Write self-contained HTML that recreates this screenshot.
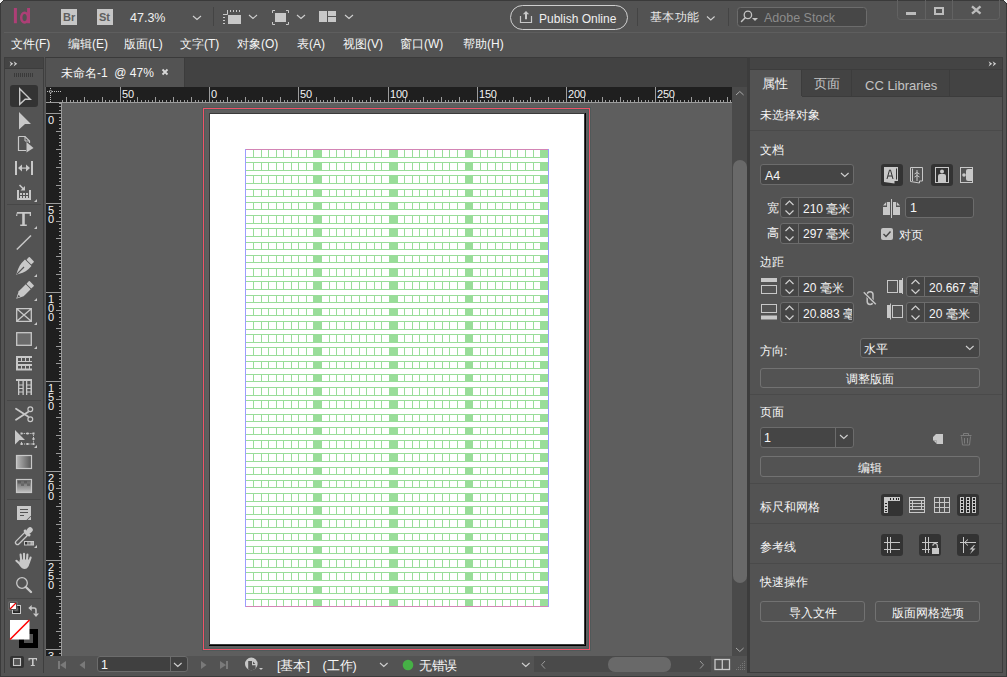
<!DOCTYPE html>
<html><head><meta charset="utf-8">
<style>
*{box-sizing:border-box;margin:0;padding:0}
html,body{width:1007px;height:677px;overflow:hidden;background:#535353;font-family:"Liberation Sans",sans-serif;color:#f6f6f6;font-size:12px}
body{position:relative}
.a{position:absolute}
.t{position:absolute;white-space:nowrap;line-height:1}
svg{position:absolute;overflow:visible}
.rl{position:absolute;font-size:11px;line-height:8px;height:8px;color:#f2f2f2;letter-spacing:-0.2px;white-space:nowrap}
.fld{position:absolute;background:#454545;border:1px solid #6c6c6c;border-radius:3px}
.btn{position:absolute;border:1px solid #727272;border-radius:3px;text-align:center;line-height:18px;font-size:12px}
.ic{fill:#c8c8c8;stroke:#c8c8c8}
</style></head><body>
<!-- window frame -->
<div class="a" style="left:0;top:0;width:1007px;height:677px;background:#535353;border:1px solid #3a3a3a"></div>
<div class="a" style="left:4px;top:32px;width:1002px;height:1px;background:#5e5e5e"></div>

<svg style="left:0;top:0" width="1007" height="677">
<!-- separators -->
<path d="M213.5 7v19M637.5 8v18M728.5 8v18" stroke="#444" stroke-width="1"/>
<!-- chevrons -->
<path d="M193 16l4 3.5 4-3.5M249 15l4 3.5 4-3.5M297 15l4 3.5 4-3.5M345 15l4 3.5 4-3.5M707 16.5l3.8 3.5 3.8-3.5" fill="none" stroke="#cfcfcf" stroke-width="1.1"/>
<!-- ruler icon -->
<path d="M228 15h13v9h-13z" fill="#c8c8c8"/>
<path d="M227.5 10v4.5H223" fill="none" stroke="#c8c8c8" stroke-width="1"/>
<path d="M230.5 10v2M233.5 10v2M236.5 10v2M239.5 10v2M223 17.5h2M223 20.5h2M223 23.5h2" stroke="#c8c8c8" stroke-width="1"/>
<!-- screen mode icon -->
<path d="M275 13h11v9h-11z" fill="#c8c8c8"/>
<path d="M272.5 13V10.5H275M286 10.5h2.5V13M288.5 22v2.5H286M275 24.5h-2.5V22" fill="none" stroke="#c8c8c8" stroke-width="1"/>
<!-- arrange icon -->
<path d="M319 11h8v11h-8zM328 11h8v5h-8zM328 17h8v5h-8z" fill="#c8c8c8"/>
<!-- publish button -->
<rect x="510.5" y="5.5" width="117" height="24" rx="12" fill="none" stroke="#cfcfcf" stroke-width="1"/>
<path d="M520.5 16v6.5h11V16" fill="none" stroke="#c8c8c8" stroke-width="1.2"/>
<path d="M526 11l-3.2 3.2h2.2v5h2v-5h2.2z" fill="#c8c8c8"/>
<!-- search box -->
<rect x="737.5" y="7.5" width="129" height="19" rx="3" fill="#474747" stroke="#6c6c6c" stroke-width="1"/>
<circle cx="747.9" cy="14.9" r="3.7" fill="none" stroke="#c4c4c4" stroke-width="1.3"/>
<path d="M745.2 17.8L741.5 21.5" stroke="#c4c4c4" stroke-width="1.5" stroke-linecap="round"/>
<path d="M752 18h6l-3 3z" fill="#c4c4c4"/>
<!-- window buttons -->
<path d="M897.5 0v16.5a3 3 0 0 0 3 3h96a3 3 0 0 0 3-3V0M925.5 0v19.5M952.5 0v19.5" fill="none" stroke="#626262" stroke-width="1"/>
<path d="M906 12h10v3h-10z" fill="#bcbcbc"/>
<path d="M934 7h10v8h-10zM936 9v4h6v-4z" fill="#bcbcbc" fill-rule="evenodd"/>
<path d="M972 6.3l8.5 7.4M980.5 6.3l-8.5 7.4" stroke="#bcbcbc" stroke-width="2.3"/>
<!-- corners -->
<path d="M0 0h3v1h-1v1h-1v1h-1zM1007 0h-3v1h1v1h1v1h1z" fill="#f0f0f0" shape-rendering="crispEdges"/><path d="M3 0h1v1h-1v1h-1v1h-1v1h-1v-1h1v-1h1v-1h1zM1004 0h-1v1h1v1h1v1h1v1h1v-1h-1v-1h-1v-1h-1z" fill="#333" shape-rendering="crispEdges"/>
</svg>

<!-- TITLE BAR -->
<svg style="left:0;top:0" width="40" height="30"><path d="M13.9 8h3v15.2h-3zM27.1 8h2.9v15.2h-2.9z" fill="#ad3f76"/><ellipse cx="24.6" cy="17.6" rx="3.4" ry="4.8" fill="none" stroke="#ad3f76" stroke-width="2.5"/></svg>
<div class="a" style="left:61px;top:9px;width:16px;height:16px;background:#c6c6c6"></div>
<div class="t" style="left:63px;top:12px;font-size:11px;font-weight:bold;color:#5e5e5e">Br</div>
<div class="a" style="left:97px;top:9px;width:16px;height:16px;background:#c6c6c6"></div>
<div class="t" style="left:99px;top:12px;font-size:11px;font-weight:bold;color:#5e5e5e">St</div>
<div class="t" style="left:130px;top:12px;font-size:12.5px;color:#f0f0f0">47.3%</div>

<div class="t" style="left:539px;top:13px;font-size:12px;color:#f0f0f0">Publish Online</div>
<div class="t" style="left:650px;top:11px;font-size:12px;color:#e8e8e8;letter-spacing:0.3px">基本功能</div>
<div class="t" style="left:764px;top:12px;font-size:12.5px;color:#8c8c8c">Adobe Stock</div>
<!-- MENU BAR -->
<div class="t" style="left:11px;top:38px">文件(F)</div>
<div class="t" style="left:68px;top:38px">编辑(E)</div>
<div class="t" style="left:124px;top:38px">版面(L)</div>
<div class="t" style="left:180px;top:38px">文字(T)</div>
<div class="t" style="left:237px;top:38px">对象(O)</div>
<div class="t" style="left:297px;top:38px">表(A)</div>
<div class="t" style="left:343px;top:38px">视图(V)</div>
<div class="t" style="left:400px;top:38px">窗口(W)</div>
<div class="t" style="left:463px;top:38px">帮助(H)</div>

<!-- LEFT TOOLBAR -->
<div class="a" style="left:45px;top:57px;width:958px;height:1px;background:#3a3a3a"></div>
<div class="a" style="left:4px;top:57px;width:40px;height:616px;background:#535353;border:1px solid #3e3e3e;border-bottom:none"></div>
<div class="a" style="left:5px;top:58px;width:38px;height:11px;background:#444;border-bottom:1px solid #3c3c3c"></div>

<!-- DOC TAB BAR -->
<div class="a" style="left:45px;top:58px;width:704px;height:29px;background:#424242"></div>
<div class="a" style="left:46px;top:58px;width:138px;height:29px;background:#535353"></div>
<div class="a" style="left:184px;top:58px;width:1px;height:29px;background:#3c3c3c"></div>
<div class="t" style="left:61px;top:67px">未命名-1&nbsp; @ 47%</div>
<svg style="left:0;top:0" width="1" height="1"><path d="M162.5 69.5l5 5M167.5 69.5l-5 5" stroke="#d8d8d8" stroke-width="1.8"/></svg>

<!-- CANVAS -->
<div class="a" style="left:45px;top:87px;width:687px;height:569px;background:#5e5e5e"></div>
<div class="a" style="left:46px;top:87px;width:686px;height:15px;background:#1f1f1f"></div>
<div class="a" style="left:46px;top:103px;width:15px;height:553px;background:#1f1f1f"></div>
<svg style="left:0;top:0" width="1007" height="677" shape-rendering="crispEdges">
<path d="M62.5 100V102M66.5 97V102M70.5 100V102M73.5 100V102M77.5 100V102M80.5 100V102M84.5 97V102M87.5 100V102M91.5 100V102M95.5 100V102M98.5 100V102M102.5 97V102M105.5 100V102M109.5 100V102M112.5 100V102M116.5 100V102M120.5 87V102M123.5 100V102M127.5 100V102M130.5 100V102M134.5 100V102M137.5 97V102M141.5 100V102M145.5 100V102M148.5 100V102M152.5 100V102M155.5 97V102M159.5 100V102M162.5 100V102M166.5 100V102M170.5 100V102M173.5 97V102M177.5 100V102M180.5 100V102M184.5 100V102M187.5 100V102M191.5 97V102M195.5 100V102M198.5 100V102M202.5 100V102M205.5 100V102M209.5 87V102M212.5 100V102M216.5 100V102M220.5 100V102M223.5 100V102M227.5 97V102M230.5 100V102M234.5 100V102M237.5 100V102M241.5 100V102M245.5 97V102M248.5 100V102M252.5 100V102M255.5 100V102M259.5 100V102M262.5 97V102M266.5 100V102M270.5 100V102M273.5 100V102M277.5 100V102M280.5 97V102M284.5 100V102M287.5 100V102M291.5 100V102M295.5 100V102M298.5 87V102M302.5 100V102M305.5 100V102M309.5 100V102M312.5 100V102M316.5 97V102M320.5 100V102M323.5 100V102M327.5 100V102M330.5 100V102M334.5 97V102M337.5 100V102M341.5 100V102M345.5 100V102M348.5 100V102M352.5 97V102M355.5 100V102M359.5 100V102M362.5 100V102M366.5 100V102M370.5 97V102M373.5 100V102M377.5 100V102M380.5 100V102M384.5 100V102M388.5 87V102M391.5 100V102M395.5 100V102M398.5 100V102M402.5 100V102M405.5 97V102M409.5 100V102M413.5 100V102M416.5 100V102M420.5 100V102M423.5 97V102M427.5 100V102M430.5 100V102M434.5 100V102M438.5 100V102M441.5 97V102M445.5 100V102M448.5 100V102M452.5 100V102M455.5 100V102M459.5 97V102M463.5 100V102M466.5 100V102M470.5 100V102M473.5 100V102M477.5 87V102M480.5 100V102M484.5 100V102M488.5 100V102M491.5 100V102M495.5 97V102M498.5 100V102M502.5 100V102M505.5 100V102M509.5 100V102M513.5 97V102M516.5 100V102M520.5 100V102M523.5 100V102M527.5 100V102M530.5 97V102M534.5 100V102M538.5 100V102M541.5 100V102M545.5 100V102M548.5 97V102M552.5 100V102M555.5 100V102M559.5 100V102M563.5 100V102M566.5 87V102M570.5 100V102M573.5 100V102M577.5 100V102M580.5 100V102M584.5 97V102M588.5 100V102M591.5 100V102M595.5 100V102M598.5 100V102M602.5 97V102M605.5 100V102M609.5 100V102M613.5 100V102M616.5 100V102M620.5 97V102M623.5 100V102M627.5 100V102M630.5 100V102M634.5 100V102M638.5 97V102M641.5 100V102M645.5 100V102M648.5 100V102M652.5 100V102M655.5 87V102M659.5 100V102M663.5 100V102M666.5 100V102M670.5 100V102M673.5 97V102M677.5 100V102M680.5 100V102M684.5 100V102M688.5 100V102M691.5 97V102M695.5 100V102M698.5 100V102M702.5 100V102M705.5 100V102M709.5 97V102M713.5 100V102M716.5 100V102M720.5 100V102M723.5 100V102M727.5 97V102M730.5 100V102M46 102.5H732" stroke="#9c9c9c" fill="none"/>
<path d="M59 103.5H61M59 106.5H61M59 110.5H61M46 113.5H61M59 117.5H61M59 120.5H61M59 124.5H61M59 128.5H61M56 131.5H61M59 135.5H61M59 138.5H61M59 142.5H61M59 145.5H61M56 149.5H61M59 153.5H61M59 156.5H61M59 160.5H61M59 163.5H61M56 167.5H61M59 171.5H61M59 174.5H61M59 178.5H61M59 181.5H61M56 185.5H61M59 188.5H61M59 192.5H61M59 196.5H61M59 199.5H61M46 203.5H61M59 206.5H61M59 210.5H61M59 213.5H61M59 217.5H61M56 221.5H61M59 224.5H61M59 228.5H61M59 231.5H61M59 235.5H61M56 238.5H61M59 242.5H61M59 246.5H61M59 249.5H61M59 253.5H61M56 256.5H61M59 260.5H61M59 263.5H61M59 267.5H61M59 271.5H61M56 274.5H61M59 278.5H61M59 281.5H61M59 285.5H61M59 288.5H61M46 292.5H61M59 296.5H61M59 299.5H61M59 303.5H61M59 306.5H61M56 310.5H61M59 313.5H61M59 317.5H61M59 321.5H61M59 324.5H61M56 328.5H61M59 331.5H61M59 335.5H61M59 338.5H61M59 342.5H61M56 346.5H61M59 349.5H61M59 353.5H61M59 356.5H61M59 360.5H61M56 363.5H61M59 367.5H61M59 371.5H61M59 374.5H61M59 378.5H61M46 381.5H61M59 385.5H61M59 388.5H61M59 392.5H61M59 396.5H61M56 399.5H61M59 403.5H61M59 406.5H61M59 410.5H61M59 413.5H61M56 417.5H61M59 421.5H61M59 424.5H61M59 428.5H61M59 431.5H61M56 435.5H61M59 438.5H61M59 442.5H61M59 446.5H61M59 449.5H61M56 453.5H61M59 456.5H61M59 460.5H61M59 463.5H61M59 467.5H61M46 471.5H61M59 474.5H61M59 478.5H61M59 481.5H61M59 485.5H61M56 488.5H61M59 492.5H61M59 496.5H61M59 499.5H61M59 503.5H61M56 506.5H61M59 510.5H61M59 513.5H61M59 517.5H61M59 521.5H61M56 524.5H61M59 528.5H61M59 531.5H61M59 535.5H61M59 538.5H61M56 542.5H61M59 546.5H61M59 549.5H61M59 553.5H61M59 556.5H61M46 560.5H61M59 563.5H61M59 567.5H61M59 571.5H61M59 574.5H61M56 578.5H61M59 581.5H61M59 585.5H61M59 588.5H61M59 592.5H61M56 596.5H61M59 599.5H61M59 603.5H61M59 606.5H61M59 610.5H61M56 613.5H61M59 617.5H61M59 621.5H61M59 624.5H61M59 628.5H61M56 631.5H61M59 635.5H61M59 638.5H61M59 642.5H61M59 646.5H61M46 649.5H61M59 653.5H61M61.5 103V656" stroke="#9c9c9c" fill="none"/>
</svg><div class="rl" style="left:122px;top:90px">50</div><div class="rl" style="left:211px;top:90px">0</div><div class="rl" style="left:300px;top:90px">50</div><div class="rl" style="left:390px;top:90px">100</div><div class="rl" style="left:479px;top:90px">150</div><div class="rl" style="left:568px;top:90px">200</div><div class="rl" style="left:657px;top:90px">250</div><div class="a" style="left:46px;top:103px;width:15px;height:553px;overflow:hidden"><div class="rl" style="left:2px;top:13px">0</div><div class="rl" style="left:2px;top:103px">5</div><div class="rl" style="left:2px;top:112px">0</div><div class="rl" style="left:2px;top:192px">1</div><div class="rl" style="left:2px;top:201px">0</div><div class="rl" style="left:2px;top:210px">0</div><div class="rl" style="left:2px;top:281px">1</div><div class="rl" style="left:2px;top:290px">5</div><div class="rl" style="left:2px;top:299px">0</div><div class="rl" style="left:2px;top:371px">2</div><div class="rl" style="left:2px;top:380px">0</div><div class="rl" style="left:2px;top:389px">0</div><div class="rl" style="left:2px;top:460px">2</div><div class="rl" style="left:2px;top:469px">5</div><div class="rl" style="left:2px;top:478px">0</div><div class="rl" style="left:2px;top:549px">3</div><div class="rl" style="left:2px;top:558px">0</div><div class="rl" style="left:2px;top:567px">0</div></div>

<!-- page -->
<div class="a" style="left:202px;top:107px;width:389px;height:544px;border:1px solid #4f5959"></div>
<div class="a" style="left:203px;top:108px;width:387px;height:542px;border:1px solid #ef5468"></div>
<div class="a" style="left:204px;top:109px;width:385px;height:540px;border:1px solid #4f5959"></div>
<div class="a" style="left:209px;top:113px;width:377px;height:533px;background:#000"></div>
<div class="a" style="left:209px;top:113px;width:376px;height:532px;background:#3a3a3a"></div>
<div class="a" style="left:210px;top:114px;width:374px;height:530px;background:#fff"></div>
<svg style="left:0;top:0" width="1007" height="677" shape-rendering="crispEdges">
<path d="M313 149H322V158H313ZM389 149H398V158H389ZM465 149H473V158H465ZM540 149H549V158H540ZM313 162H322V171H313ZM389 162H398V171H389ZM465 162H473V171H465ZM540 162H549V171H540ZM313 175H322V184H313ZM389 175H398V184H389ZM465 175H473V184H465ZM540 175H549V184H540ZM313 189H322V197H313ZM389 189H398V197H389ZM465 189H473V197H465ZM540 189H549V197H540ZM313 202H322V210H313ZM389 202H398V210H389ZM465 202H473V210H465ZM540 202H549V210H540ZM313 215H322V224H313ZM389 215H398V224H389ZM465 215H473V224H465ZM540 215H549V224H540ZM313 228H322V237H313ZM389 228H398V237H389ZM465 228H473V237H465ZM540 228H549V237H540ZM313 242H322V250H313ZM389 242H398V250H389ZM465 242H473V250H465ZM540 242H549V250H540ZM313 255H322V263H313ZM389 255H398V263H389ZM465 255H473V263H465ZM540 255H549V263H540ZM313 268H322V277H313ZM389 268H398V277H389ZM465 268H473V277H465ZM540 268H549V277H540ZM313 281H322V290H313ZM389 281H398V290H389ZM465 281H473V290H465ZM540 281H549V290H540ZM313 295H322V303H313ZM389 295H398V303H389ZM465 295H473V303H465ZM540 295H549V303H540ZM313 308H322V316H313ZM389 308H398V316H389ZM465 308H473V316H465ZM540 308H549V316H540ZM313 321H322V330H313ZM389 321H398V330H389ZM465 321H473V330H465ZM540 321H549V330H540ZM313 334H322V343H313ZM389 334H398V343H389ZM465 334H473V343H465ZM540 334H549V343H540ZM313 347H322V356H313ZM389 347H398V356H389ZM465 347H473V356H465ZM540 347H549V356H540ZM313 361H322V369H313ZM389 361H398V369H389ZM465 361H473V369H465ZM540 361H549V369H540ZM313 374H322V382H313ZM389 374H398V382H389ZM465 374H473V382H465ZM540 374H549V382H540ZM313 387H322V396H313ZM389 387H398V396H389ZM465 387H473V396H465ZM540 387H549V396H540ZM313 400H322V409H313ZM389 400H398V409H389ZM465 400H473V409H465ZM540 400H549V409H540ZM313 414H322V422H313ZM389 414H398V422H389ZM465 414H473V422H465ZM540 414H549V422H540ZM313 427H322V435H313ZM389 427H398V435H389ZM465 427H473V435H465ZM540 427H549V435H540ZM313 440H322V449H313ZM389 440H398V449H389ZM465 440H473V449H465ZM540 440H549V449H540ZM313 453H322V462H313ZM389 453H398V462H389ZM465 453H473V462H465ZM540 453H549V462H540ZM313 467H322V475H313ZM389 467H398V475H389ZM465 467H473V475H465ZM540 467H549V475H540ZM313 480H322V488H313ZM389 480H398V488H389ZM465 480H473V488H465ZM540 480H549V488H540ZM313 493H322V502H313ZM389 493H398V502H389ZM465 493H473V502H465ZM540 493H549V502H540ZM313 506H322V515H313ZM389 506H398V515H389ZM465 506H473V515H465ZM540 506H549V515H540ZM313 519H322V528H313ZM389 519H398V528H389ZM465 519H473V528H465ZM540 519H549V528H540ZM313 533H322V541H313ZM389 533H398V541H389ZM465 533H473V541H465ZM540 533H549V541H540ZM313 546H322V554H313ZM389 546H398V554H389ZM465 546H473V554H465ZM540 546H549V554H540ZM313 559H322V568H313ZM389 559H398V568H389ZM465 559H473V568H465ZM540 559H549V568H540ZM313 572H322V581H313ZM389 572H398V581H389ZM465 572H473V581H465ZM540 572H549V581H540ZM313 586H322V594H313ZM389 586H398V594H389ZM465 586H473V594H465ZM540 586H549V594H540ZM313 599H322V607H313ZM389 599H398V607H389ZM465 599H473V607H465ZM540 599H549V607H540Z" fill="#99dd99"/>
<path d="M245 149.5H549M245 157.5H549M253.5 149v9M261.5 149v9M268.5 149v9M276.5 149v9M283.5 149v9M291.5 149v9M298.5 149v9M306.5 149v9M313.5 149v9M321.5 149v9M329.5 149v9M336.5 149v9M344.5 149v9M351.5 149v9M359.5 149v9M366.5 149v9M374.5 149v9M381.5 149v9M389.5 149v9M397.5 149v9M404.5 149v9M412.5 149v9M419.5 149v9M427.5 149v9M434.5 149v9M442.5 149v9M449.5 149v9M457.5 149v9M465.5 149v9M472.5 149v9M480.5 149v9M487.5 149v9M495.5 149v9M502.5 149v9M510.5 149v9M517.5 149v9M525.5 149v9M533.5 149v9M540.5 149v9M245 162.5H549M245 170.5H549M253.5 162v9M261.5 162v9M268.5 162v9M276.5 162v9M283.5 162v9M291.5 162v9M298.5 162v9M306.5 162v9M313.5 162v9M321.5 162v9M329.5 162v9M336.5 162v9M344.5 162v9M351.5 162v9M359.5 162v9M366.5 162v9M374.5 162v9M381.5 162v9M389.5 162v9M397.5 162v9M404.5 162v9M412.5 162v9M419.5 162v9M427.5 162v9M434.5 162v9M442.5 162v9M449.5 162v9M457.5 162v9M465.5 162v9M472.5 162v9M480.5 162v9M487.5 162v9M495.5 162v9M502.5 162v9M510.5 162v9M517.5 162v9M525.5 162v9M533.5 162v9M540.5 162v9M245 175.5H549M245 183.5H549M253.5 175v9M261.5 175v9M268.5 175v9M276.5 175v9M283.5 175v9M291.5 175v9M298.5 175v9M306.5 175v9M313.5 175v9M321.5 175v9M329.5 175v9M336.5 175v9M344.5 175v9M351.5 175v9M359.5 175v9M366.5 175v9M374.5 175v9M381.5 175v9M389.5 175v9M397.5 175v9M404.5 175v9M412.5 175v9M419.5 175v9M427.5 175v9M434.5 175v9M442.5 175v9M449.5 175v9M457.5 175v9M465.5 175v9M472.5 175v9M480.5 175v9M487.5 175v9M495.5 175v9M502.5 175v9M510.5 175v9M517.5 175v9M525.5 175v9M533.5 175v9M540.5 175v9M245 189.5H549M245 196.5H549M253.5 189v8M261.5 189v8M268.5 189v8M276.5 189v8M283.5 189v8M291.5 189v8M298.5 189v8M306.5 189v8M313.5 189v8M321.5 189v8M329.5 189v8M336.5 189v8M344.5 189v8M351.5 189v8M359.5 189v8M366.5 189v8M374.5 189v8M381.5 189v8M389.5 189v8M397.5 189v8M404.5 189v8M412.5 189v8M419.5 189v8M427.5 189v8M434.5 189v8M442.5 189v8M449.5 189v8M457.5 189v8M465.5 189v8M472.5 189v8M480.5 189v8M487.5 189v8M495.5 189v8M502.5 189v8M510.5 189v8M517.5 189v8M525.5 189v8M533.5 189v8M540.5 189v8M245 202.5H549M245 209.5H549M253.5 202v8M261.5 202v8M268.5 202v8M276.5 202v8M283.5 202v8M291.5 202v8M298.5 202v8M306.5 202v8M313.5 202v8M321.5 202v8M329.5 202v8M336.5 202v8M344.5 202v8M351.5 202v8M359.5 202v8M366.5 202v8M374.5 202v8M381.5 202v8M389.5 202v8M397.5 202v8M404.5 202v8M412.5 202v8M419.5 202v8M427.5 202v8M434.5 202v8M442.5 202v8M449.5 202v8M457.5 202v8M465.5 202v8M472.5 202v8M480.5 202v8M487.5 202v8M495.5 202v8M502.5 202v8M510.5 202v8M517.5 202v8M525.5 202v8M533.5 202v8M540.5 202v8M245 215.5H549M245 223.5H549M253.5 215v9M261.5 215v9M268.5 215v9M276.5 215v9M283.5 215v9M291.5 215v9M298.5 215v9M306.5 215v9M313.5 215v9M321.5 215v9M329.5 215v9M336.5 215v9M344.5 215v9M351.5 215v9M359.5 215v9M366.5 215v9M374.5 215v9M381.5 215v9M389.5 215v9M397.5 215v9M404.5 215v9M412.5 215v9M419.5 215v9M427.5 215v9M434.5 215v9M442.5 215v9M449.5 215v9M457.5 215v9M465.5 215v9M472.5 215v9M480.5 215v9M487.5 215v9M495.5 215v9M502.5 215v9M510.5 215v9M517.5 215v9M525.5 215v9M533.5 215v9M540.5 215v9M245 228.5H549M245 236.5H549M253.5 228v9M261.5 228v9M268.5 228v9M276.5 228v9M283.5 228v9M291.5 228v9M298.5 228v9M306.5 228v9M313.5 228v9M321.5 228v9M329.5 228v9M336.5 228v9M344.5 228v9M351.5 228v9M359.5 228v9M366.5 228v9M374.5 228v9M381.5 228v9M389.5 228v9M397.5 228v9M404.5 228v9M412.5 228v9M419.5 228v9M427.5 228v9M434.5 228v9M442.5 228v9M449.5 228v9M457.5 228v9M465.5 228v9M472.5 228v9M480.5 228v9M487.5 228v9M495.5 228v9M502.5 228v9M510.5 228v9M517.5 228v9M525.5 228v9M533.5 228v9M540.5 228v9M245 242.5H549M245 249.5H549M253.5 242v8M261.5 242v8M268.5 242v8M276.5 242v8M283.5 242v8M291.5 242v8M298.5 242v8M306.5 242v8M313.5 242v8M321.5 242v8M329.5 242v8M336.5 242v8M344.5 242v8M351.5 242v8M359.5 242v8M366.5 242v8M374.5 242v8M381.5 242v8M389.5 242v8M397.5 242v8M404.5 242v8M412.5 242v8M419.5 242v8M427.5 242v8M434.5 242v8M442.5 242v8M449.5 242v8M457.5 242v8M465.5 242v8M472.5 242v8M480.5 242v8M487.5 242v8M495.5 242v8M502.5 242v8M510.5 242v8M517.5 242v8M525.5 242v8M533.5 242v8M540.5 242v8M245 255.5H549M245 262.5H549M253.5 255v8M261.5 255v8M268.5 255v8M276.5 255v8M283.5 255v8M291.5 255v8M298.5 255v8M306.5 255v8M313.5 255v8M321.5 255v8M329.5 255v8M336.5 255v8M344.5 255v8M351.5 255v8M359.5 255v8M366.5 255v8M374.5 255v8M381.5 255v8M389.5 255v8M397.5 255v8M404.5 255v8M412.5 255v8M419.5 255v8M427.5 255v8M434.5 255v8M442.5 255v8M449.5 255v8M457.5 255v8M465.5 255v8M472.5 255v8M480.5 255v8M487.5 255v8M495.5 255v8M502.5 255v8M510.5 255v8M517.5 255v8M525.5 255v8M533.5 255v8M540.5 255v8M245 268.5H549M245 276.5H549M253.5 268v9M261.5 268v9M268.5 268v9M276.5 268v9M283.5 268v9M291.5 268v9M298.5 268v9M306.5 268v9M313.5 268v9M321.5 268v9M329.5 268v9M336.5 268v9M344.5 268v9M351.5 268v9M359.5 268v9M366.5 268v9M374.5 268v9M381.5 268v9M389.5 268v9M397.5 268v9M404.5 268v9M412.5 268v9M419.5 268v9M427.5 268v9M434.5 268v9M442.5 268v9M449.5 268v9M457.5 268v9M465.5 268v9M472.5 268v9M480.5 268v9M487.5 268v9M495.5 268v9M502.5 268v9M510.5 268v9M517.5 268v9M525.5 268v9M533.5 268v9M540.5 268v9M245 281.5H549M245 289.5H549M253.5 281v9M261.5 281v9M268.5 281v9M276.5 281v9M283.5 281v9M291.5 281v9M298.5 281v9M306.5 281v9M313.5 281v9M321.5 281v9M329.5 281v9M336.5 281v9M344.5 281v9M351.5 281v9M359.5 281v9M366.5 281v9M374.5 281v9M381.5 281v9M389.5 281v9M397.5 281v9M404.5 281v9M412.5 281v9M419.5 281v9M427.5 281v9M434.5 281v9M442.5 281v9M449.5 281v9M457.5 281v9M465.5 281v9M472.5 281v9M480.5 281v9M487.5 281v9M495.5 281v9M502.5 281v9M510.5 281v9M517.5 281v9M525.5 281v9M533.5 281v9M540.5 281v9M245 295.5H549M245 302.5H549M253.5 295v8M261.5 295v8M268.5 295v8M276.5 295v8M283.5 295v8M291.5 295v8M298.5 295v8M306.5 295v8M313.5 295v8M321.5 295v8M329.5 295v8M336.5 295v8M344.5 295v8M351.5 295v8M359.5 295v8M366.5 295v8M374.5 295v8M381.5 295v8M389.5 295v8M397.5 295v8M404.5 295v8M412.5 295v8M419.5 295v8M427.5 295v8M434.5 295v8M442.5 295v8M449.5 295v8M457.5 295v8M465.5 295v8M472.5 295v8M480.5 295v8M487.5 295v8M495.5 295v8M502.5 295v8M510.5 295v8M517.5 295v8M525.5 295v8M533.5 295v8M540.5 295v8M245 308.5H549M245 315.5H549M253.5 308v8M261.5 308v8M268.5 308v8M276.5 308v8M283.5 308v8M291.5 308v8M298.5 308v8M306.5 308v8M313.5 308v8M321.5 308v8M329.5 308v8M336.5 308v8M344.5 308v8M351.5 308v8M359.5 308v8M366.5 308v8M374.5 308v8M381.5 308v8M389.5 308v8M397.5 308v8M404.5 308v8M412.5 308v8M419.5 308v8M427.5 308v8M434.5 308v8M442.5 308v8M449.5 308v8M457.5 308v8M465.5 308v8M472.5 308v8M480.5 308v8M487.5 308v8M495.5 308v8M502.5 308v8M510.5 308v8M517.5 308v8M525.5 308v8M533.5 308v8M540.5 308v8M245 321.5H549M245 329.5H549M253.5 321v9M261.5 321v9M268.5 321v9M276.5 321v9M283.5 321v9M291.5 321v9M298.5 321v9M306.5 321v9M313.5 321v9M321.5 321v9M329.5 321v9M336.5 321v9M344.5 321v9M351.5 321v9M359.5 321v9M366.5 321v9M374.5 321v9M381.5 321v9M389.5 321v9M397.5 321v9M404.5 321v9M412.5 321v9M419.5 321v9M427.5 321v9M434.5 321v9M442.5 321v9M449.5 321v9M457.5 321v9M465.5 321v9M472.5 321v9M480.5 321v9M487.5 321v9M495.5 321v9M502.5 321v9M510.5 321v9M517.5 321v9M525.5 321v9M533.5 321v9M540.5 321v9M245 334.5H549M245 342.5H549M253.5 334v9M261.5 334v9M268.5 334v9M276.5 334v9M283.5 334v9M291.5 334v9M298.5 334v9M306.5 334v9M313.5 334v9M321.5 334v9M329.5 334v9M336.5 334v9M344.5 334v9M351.5 334v9M359.5 334v9M366.5 334v9M374.5 334v9M381.5 334v9M389.5 334v9M397.5 334v9M404.5 334v9M412.5 334v9M419.5 334v9M427.5 334v9M434.5 334v9M442.5 334v9M449.5 334v9M457.5 334v9M465.5 334v9M472.5 334v9M480.5 334v9M487.5 334v9M495.5 334v9M502.5 334v9M510.5 334v9M517.5 334v9M525.5 334v9M533.5 334v9M540.5 334v9M245 347.5H549M245 355.5H549M253.5 347v9M261.5 347v9M268.5 347v9M276.5 347v9M283.5 347v9M291.5 347v9M298.5 347v9M306.5 347v9M313.5 347v9M321.5 347v9M329.5 347v9M336.5 347v9M344.5 347v9M351.5 347v9M359.5 347v9M366.5 347v9M374.5 347v9M381.5 347v9M389.5 347v9M397.5 347v9M404.5 347v9M412.5 347v9M419.5 347v9M427.5 347v9M434.5 347v9M442.5 347v9M449.5 347v9M457.5 347v9M465.5 347v9M472.5 347v9M480.5 347v9M487.5 347v9M495.5 347v9M502.5 347v9M510.5 347v9M517.5 347v9M525.5 347v9M533.5 347v9M540.5 347v9M245 361.5H549M245 368.5H549M253.5 361v8M261.5 361v8M268.5 361v8M276.5 361v8M283.5 361v8M291.5 361v8M298.5 361v8M306.5 361v8M313.5 361v8M321.5 361v8M329.5 361v8M336.5 361v8M344.5 361v8M351.5 361v8M359.5 361v8M366.5 361v8M374.5 361v8M381.5 361v8M389.5 361v8M397.5 361v8M404.5 361v8M412.5 361v8M419.5 361v8M427.5 361v8M434.5 361v8M442.5 361v8M449.5 361v8M457.5 361v8M465.5 361v8M472.5 361v8M480.5 361v8M487.5 361v8M495.5 361v8M502.5 361v8M510.5 361v8M517.5 361v8M525.5 361v8M533.5 361v8M540.5 361v8M245 374.5H549M245 381.5H549M253.5 374v8M261.5 374v8M268.5 374v8M276.5 374v8M283.5 374v8M291.5 374v8M298.5 374v8M306.5 374v8M313.5 374v8M321.5 374v8M329.5 374v8M336.5 374v8M344.5 374v8M351.5 374v8M359.5 374v8M366.5 374v8M374.5 374v8M381.5 374v8M389.5 374v8M397.5 374v8M404.5 374v8M412.5 374v8M419.5 374v8M427.5 374v8M434.5 374v8M442.5 374v8M449.5 374v8M457.5 374v8M465.5 374v8M472.5 374v8M480.5 374v8M487.5 374v8M495.5 374v8M502.5 374v8M510.5 374v8M517.5 374v8M525.5 374v8M533.5 374v8M540.5 374v8M245 387.5H549M245 395.5H549M253.5 387v9M261.5 387v9M268.5 387v9M276.5 387v9M283.5 387v9M291.5 387v9M298.5 387v9M306.5 387v9M313.5 387v9M321.5 387v9M329.5 387v9M336.5 387v9M344.5 387v9M351.5 387v9M359.5 387v9M366.5 387v9M374.5 387v9M381.5 387v9M389.5 387v9M397.5 387v9M404.5 387v9M412.5 387v9M419.5 387v9M427.5 387v9M434.5 387v9M442.5 387v9M449.5 387v9M457.5 387v9M465.5 387v9M472.5 387v9M480.5 387v9M487.5 387v9M495.5 387v9M502.5 387v9M510.5 387v9M517.5 387v9M525.5 387v9M533.5 387v9M540.5 387v9M245 400.5H549M245 408.5H549M253.5 400v9M261.5 400v9M268.5 400v9M276.5 400v9M283.5 400v9M291.5 400v9M298.5 400v9M306.5 400v9M313.5 400v9M321.5 400v9M329.5 400v9M336.5 400v9M344.5 400v9M351.5 400v9M359.5 400v9M366.5 400v9M374.5 400v9M381.5 400v9M389.5 400v9M397.5 400v9M404.5 400v9M412.5 400v9M419.5 400v9M427.5 400v9M434.5 400v9M442.5 400v9M449.5 400v9M457.5 400v9M465.5 400v9M472.5 400v9M480.5 400v9M487.5 400v9M495.5 400v9M502.5 400v9M510.5 400v9M517.5 400v9M525.5 400v9M533.5 400v9M540.5 400v9M245 414.5H549M245 421.5H549M253.5 414v8M261.5 414v8M268.5 414v8M276.5 414v8M283.5 414v8M291.5 414v8M298.5 414v8M306.5 414v8M313.5 414v8M321.5 414v8M329.5 414v8M336.5 414v8M344.5 414v8M351.5 414v8M359.5 414v8M366.5 414v8M374.5 414v8M381.5 414v8M389.5 414v8M397.5 414v8M404.5 414v8M412.5 414v8M419.5 414v8M427.5 414v8M434.5 414v8M442.5 414v8M449.5 414v8M457.5 414v8M465.5 414v8M472.5 414v8M480.5 414v8M487.5 414v8M495.5 414v8M502.5 414v8M510.5 414v8M517.5 414v8M525.5 414v8M533.5 414v8M540.5 414v8M245 427.5H549M245 434.5H549M253.5 427v8M261.5 427v8M268.5 427v8M276.5 427v8M283.5 427v8M291.5 427v8M298.5 427v8M306.5 427v8M313.5 427v8M321.5 427v8M329.5 427v8M336.5 427v8M344.5 427v8M351.5 427v8M359.5 427v8M366.5 427v8M374.5 427v8M381.5 427v8M389.5 427v8M397.5 427v8M404.5 427v8M412.5 427v8M419.5 427v8M427.5 427v8M434.5 427v8M442.5 427v8M449.5 427v8M457.5 427v8M465.5 427v8M472.5 427v8M480.5 427v8M487.5 427v8M495.5 427v8M502.5 427v8M510.5 427v8M517.5 427v8M525.5 427v8M533.5 427v8M540.5 427v8M245 440.5H549M245 448.5H549M253.5 440v9M261.5 440v9M268.5 440v9M276.5 440v9M283.5 440v9M291.5 440v9M298.5 440v9M306.5 440v9M313.5 440v9M321.5 440v9M329.5 440v9M336.5 440v9M344.5 440v9M351.5 440v9M359.5 440v9M366.5 440v9M374.5 440v9M381.5 440v9M389.5 440v9M397.5 440v9M404.5 440v9M412.5 440v9M419.5 440v9M427.5 440v9M434.5 440v9M442.5 440v9M449.5 440v9M457.5 440v9M465.5 440v9M472.5 440v9M480.5 440v9M487.5 440v9M495.5 440v9M502.5 440v9M510.5 440v9M517.5 440v9M525.5 440v9M533.5 440v9M540.5 440v9M245 453.5H549M245 461.5H549M253.5 453v9M261.5 453v9M268.5 453v9M276.5 453v9M283.5 453v9M291.5 453v9M298.5 453v9M306.5 453v9M313.5 453v9M321.5 453v9M329.5 453v9M336.5 453v9M344.5 453v9M351.5 453v9M359.5 453v9M366.5 453v9M374.5 453v9M381.5 453v9M389.5 453v9M397.5 453v9M404.5 453v9M412.5 453v9M419.5 453v9M427.5 453v9M434.5 453v9M442.5 453v9M449.5 453v9M457.5 453v9M465.5 453v9M472.5 453v9M480.5 453v9M487.5 453v9M495.5 453v9M502.5 453v9M510.5 453v9M517.5 453v9M525.5 453v9M533.5 453v9M540.5 453v9M245 467.5H549M245 474.5H549M253.5 467v8M261.5 467v8M268.5 467v8M276.5 467v8M283.5 467v8M291.5 467v8M298.5 467v8M306.5 467v8M313.5 467v8M321.5 467v8M329.5 467v8M336.5 467v8M344.5 467v8M351.5 467v8M359.5 467v8M366.5 467v8M374.5 467v8M381.5 467v8M389.5 467v8M397.5 467v8M404.5 467v8M412.5 467v8M419.5 467v8M427.5 467v8M434.5 467v8M442.5 467v8M449.5 467v8M457.5 467v8M465.5 467v8M472.5 467v8M480.5 467v8M487.5 467v8M495.5 467v8M502.5 467v8M510.5 467v8M517.5 467v8M525.5 467v8M533.5 467v8M540.5 467v8M245 480.5H549M245 487.5H549M253.5 480v8M261.5 480v8M268.5 480v8M276.5 480v8M283.5 480v8M291.5 480v8M298.5 480v8M306.5 480v8M313.5 480v8M321.5 480v8M329.5 480v8M336.5 480v8M344.5 480v8M351.5 480v8M359.5 480v8M366.5 480v8M374.5 480v8M381.5 480v8M389.5 480v8M397.5 480v8M404.5 480v8M412.5 480v8M419.5 480v8M427.5 480v8M434.5 480v8M442.5 480v8M449.5 480v8M457.5 480v8M465.5 480v8M472.5 480v8M480.5 480v8M487.5 480v8M495.5 480v8M502.5 480v8M510.5 480v8M517.5 480v8M525.5 480v8M533.5 480v8M540.5 480v8M245 493.5H549M245 501.5H549M253.5 493v9M261.5 493v9M268.5 493v9M276.5 493v9M283.5 493v9M291.5 493v9M298.5 493v9M306.5 493v9M313.5 493v9M321.5 493v9M329.5 493v9M336.5 493v9M344.5 493v9M351.5 493v9M359.5 493v9M366.5 493v9M374.5 493v9M381.5 493v9M389.5 493v9M397.5 493v9M404.5 493v9M412.5 493v9M419.5 493v9M427.5 493v9M434.5 493v9M442.5 493v9M449.5 493v9M457.5 493v9M465.5 493v9M472.5 493v9M480.5 493v9M487.5 493v9M495.5 493v9M502.5 493v9M510.5 493v9M517.5 493v9M525.5 493v9M533.5 493v9M540.5 493v9M245 506.5H549M245 514.5H549M253.5 506v9M261.5 506v9M268.5 506v9M276.5 506v9M283.5 506v9M291.5 506v9M298.5 506v9M306.5 506v9M313.5 506v9M321.5 506v9M329.5 506v9M336.5 506v9M344.5 506v9M351.5 506v9M359.5 506v9M366.5 506v9M374.5 506v9M381.5 506v9M389.5 506v9M397.5 506v9M404.5 506v9M412.5 506v9M419.5 506v9M427.5 506v9M434.5 506v9M442.5 506v9M449.5 506v9M457.5 506v9M465.5 506v9M472.5 506v9M480.5 506v9M487.5 506v9M495.5 506v9M502.5 506v9M510.5 506v9M517.5 506v9M525.5 506v9M533.5 506v9M540.5 506v9M245 519.5H549M245 527.5H549M253.5 519v9M261.5 519v9M268.5 519v9M276.5 519v9M283.5 519v9M291.5 519v9M298.5 519v9M306.5 519v9M313.5 519v9M321.5 519v9M329.5 519v9M336.5 519v9M344.5 519v9M351.5 519v9M359.5 519v9M366.5 519v9M374.5 519v9M381.5 519v9M389.5 519v9M397.5 519v9M404.5 519v9M412.5 519v9M419.5 519v9M427.5 519v9M434.5 519v9M442.5 519v9M449.5 519v9M457.5 519v9M465.5 519v9M472.5 519v9M480.5 519v9M487.5 519v9M495.5 519v9M502.5 519v9M510.5 519v9M517.5 519v9M525.5 519v9M533.5 519v9M540.5 519v9M245 533.5H549M245 540.5H549M253.5 533v8M261.5 533v8M268.5 533v8M276.5 533v8M283.5 533v8M291.5 533v8M298.5 533v8M306.5 533v8M313.5 533v8M321.5 533v8M329.5 533v8M336.5 533v8M344.5 533v8M351.5 533v8M359.5 533v8M366.5 533v8M374.5 533v8M381.5 533v8M389.5 533v8M397.5 533v8M404.5 533v8M412.5 533v8M419.5 533v8M427.5 533v8M434.5 533v8M442.5 533v8M449.5 533v8M457.5 533v8M465.5 533v8M472.5 533v8M480.5 533v8M487.5 533v8M495.5 533v8M502.5 533v8M510.5 533v8M517.5 533v8M525.5 533v8M533.5 533v8M540.5 533v8M245 546.5H549M245 553.5H549M253.5 546v8M261.5 546v8M268.5 546v8M276.5 546v8M283.5 546v8M291.5 546v8M298.5 546v8M306.5 546v8M313.5 546v8M321.5 546v8M329.5 546v8M336.5 546v8M344.5 546v8M351.5 546v8M359.5 546v8M366.5 546v8M374.5 546v8M381.5 546v8M389.5 546v8M397.5 546v8M404.5 546v8M412.5 546v8M419.5 546v8M427.5 546v8M434.5 546v8M442.5 546v8M449.5 546v8M457.5 546v8M465.5 546v8M472.5 546v8M480.5 546v8M487.5 546v8M495.5 546v8M502.5 546v8M510.5 546v8M517.5 546v8M525.5 546v8M533.5 546v8M540.5 546v8M245 559.5H549M245 567.5H549M253.5 559v9M261.5 559v9M268.5 559v9M276.5 559v9M283.5 559v9M291.5 559v9M298.5 559v9M306.5 559v9M313.5 559v9M321.5 559v9M329.5 559v9M336.5 559v9M344.5 559v9M351.5 559v9M359.5 559v9M366.5 559v9M374.5 559v9M381.5 559v9M389.5 559v9M397.5 559v9M404.5 559v9M412.5 559v9M419.5 559v9M427.5 559v9M434.5 559v9M442.5 559v9M449.5 559v9M457.5 559v9M465.5 559v9M472.5 559v9M480.5 559v9M487.5 559v9M495.5 559v9M502.5 559v9M510.5 559v9M517.5 559v9M525.5 559v9M533.5 559v9M540.5 559v9M245 572.5H549M245 580.5H549M253.5 572v9M261.5 572v9M268.5 572v9M276.5 572v9M283.5 572v9M291.5 572v9M298.5 572v9M306.5 572v9M313.5 572v9M321.5 572v9M329.5 572v9M336.5 572v9M344.5 572v9M351.5 572v9M359.5 572v9M366.5 572v9M374.5 572v9M381.5 572v9M389.5 572v9M397.5 572v9M404.5 572v9M412.5 572v9M419.5 572v9M427.5 572v9M434.5 572v9M442.5 572v9M449.5 572v9M457.5 572v9M465.5 572v9M472.5 572v9M480.5 572v9M487.5 572v9M495.5 572v9M502.5 572v9M510.5 572v9M517.5 572v9M525.5 572v9M533.5 572v9M540.5 572v9M245 586.5H549M245 593.5H549M253.5 586v8M261.5 586v8M268.5 586v8M276.5 586v8M283.5 586v8M291.5 586v8M298.5 586v8M306.5 586v8M313.5 586v8M321.5 586v8M329.5 586v8M336.5 586v8M344.5 586v8M351.5 586v8M359.5 586v8M366.5 586v8M374.5 586v8M381.5 586v8M389.5 586v8M397.5 586v8M404.5 586v8M412.5 586v8M419.5 586v8M427.5 586v8M434.5 586v8M442.5 586v8M449.5 586v8M457.5 586v8M465.5 586v8M472.5 586v8M480.5 586v8M487.5 586v8M495.5 586v8M502.5 586v8M510.5 586v8M517.5 586v8M525.5 586v8M533.5 586v8M540.5 586v8M245 599.5H549M245 606.5H549M253.5 599v8M261.5 599v8M268.5 599v8M276.5 599v8M283.5 599v8M291.5 599v8M298.5 599v8M306.5 599v8M313.5 599v8M321.5 599v8M329.5 599v8M336.5 599v8M344.5 599v8M351.5 599v8M359.5 599v8M366.5 599v8M374.5 599v8M381.5 599v8M389.5 599v8M397.5 599v8M404.5 599v8M412.5 599v8M419.5 599v8M427.5 599v8M434.5 599v8M442.5 599v8M449.5 599v8M457.5 599v8M465.5 599v8M472.5 599v8M480.5 599v8M487.5 599v8M495.5 599v8M502.5 599v8M510.5 599v8M517.5 599v8M525.5 599v8M533.5 599v8M540.5 599v8" stroke="#99dd99" fill="none"/>
<path d="M245 149.5H549M245 606.5H549" stroke="#d385b5"/>
<path d="M245.5 149V607M548.5 149V607" stroke="#9c9cff"/>
</svg>

<!-- v scrollbar -->
<div class="a" style="left:732px;top:87px;width:15px;height:569px;background:#4a4a4a"></div>
<div class="a" style="left:733px;top:160px;width:14px;height:423px;background:#696969;border-radius:7px"></div>
<!-- status bar -->
<div class="a" style="left:45px;top:656px;width:489px;height:16px;background:#535353"></div>
<div class="a" style="left:534px;top:656px;width:177px;height:16px;background:#4a4a4a"></div>
<div class="a" style="left:608px;top:657px;width:63px;height:15px;background:#696969;border-radius:7px"></div>
<div class="a" style="left:711px;top:656px;width:36px;height:16px;background:#535353"></div>
<div class="fld" style="left:97px;top:656px;width:91px;height:16px;background:#404040"></div>
<div class="a" style="left:170px;top:657px;width:1px;height:14px;background:#6c6c6c"></div>
<div class="t" style="left:101px;top:659px;font-size:12.5px">1</div>
<div class="t" style="left:277px;top:660px;font-size:12.5px">[基本]&nbsp;&nbsp;&nbsp;<span style="margin-left:2px">(工作)</span></div>
<div class="t" style="left:419px;top:660px;font-size:12.5px;letter-spacing:-0.3px">无错误</div>
<svg style="left:0;top:0" width="1007" height="677">
<path d="M736 95l3.8-3.5 3.8 3.5M736 648l3.8 3.5 3.8-3.5" fill="none" stroke="#a8a8a8" stroke-width="1"/>
<g fill="#7a7a7a">
<path d="M58 661h2v8h-2zM66 661v8l-6-4z"/>
<path d="M85 661v8l-5.5-4z"/>
<path d="M201 661v8l5.5-4z"/>
<path d="M220 661v8l6-4zM226 661h2v8h-2z"/>
</g>
<path d="M174 663l3.8 3.5 3.8-3.5M380 663l3.8 3.5 3.8-3.5M522 663l3.8 3.5 3.8-3.5" fill="none" stroke="#cfcfcf" stroke-width="1.1"/>
<path d="M545 661l-3.5 3.8 3.5 3.8M700 661l3.5 3.8-3.5 3.8" fill="none" stroke="#9a9a9a" stroke-width="1"/>
<!-- preflight icon -->
<clipPath id="pfc"><circle cx="251.3" cy="663.9" r="6.3"/></clipPath>
<circle cx="251.3" cy="663.9" r="6.3" fill="#c8c8c8"/>
<path d="M248.2 661H252V665.2H255.6V672H248.2Z" fill="#535353" clip-path="url(#pfc)"/>
<path d="M253 661.6L255.3 664H253Z" fill="#535353"/>
<path d="M259 668h4l-2 2z" fill="#c8c8c8"/>
<circle cx="408" cy="665" r="5.3" fill="#46b046"/>
<!-- split view -->
<rect x="715" y="659.5" width="14.5" height="10" fill="none" stroke="#c8c8c8" stroke-width="1.3"/>
<path d="M722.3 659.5v10" stroke="#c8c8c8" stroke-width="1.3"/>
<!-- grip -->
<g fill="#777"><rect x="744" y="661" width="1" height="1"/><rect x="742" y="663" width="1" height="1"/><rect x="744" y="663" width="1" height="1"/><rect x="740" y="665" width="1" height="1"/><rect x="742" y="665" width="1" height="1"/><rect x="744" y="665" width="1" height="1"/><rect x="738" y="667" width="1" height="1"/><rect x="740" y="667" width="1" height="1"/><rect x="742" y="667" width="1" height="1"/><rect x="744" y="667" width="1" height="1"/><rect x="736" y="669" width="1" height="1"/><rect x="738" y="669" width="1" height="1"/><rect x="740" y="669" width="1" height="1"/><rect x="742" y="669" width="1" height="1"/><rect x="744" y="669" width="1" height="1"/></g>
<!-- ruler corner crosshair -->
<path d="M47 91.5h1M49 91.5h1M52 91.5h1M54 91.5h1M56 91.5h1M58 91.5h1M60 91.5h1M50.5 88v1M50.5 90v0M50.5 93v1M50.5 95v1M50.5 97v1M50.5 99v1M50.5 101v1" stroke="#bbb" stroke-width="1"/>
<circle cx="50.5" cy="91.5" r="1.2" fill="none" stroke="#bbb" stroke-width="0.8"/>
</svg>

<!-- RIGHT PANEL -->
<div class="a" style="left:747px;top:57px;width:3px;height:616px;background:#3c3c3c"></div>
<div class="a" style="left:749px;top:57px;width:254px;height:616px;background:#535353;border:1px solid #3c3c3c"></div>
<div class="a" style="left:750px;top:58px;width:252px;height:11px;background:#444"></div>
<div class="a" style="left:750px;top:69px;width:252px;height:1px;background:#3c3c3c"></div>
<div class="a" style="left:750px;top:70px;width:252px;height:26px;background:#434343"></div>
<div class="a" style="left:750px;top:70px;width:51px;height:27px;background:#535353"></div>
<div class="a" style="left:801px;top:70px;width:1px;height:26px;background:#3c3c3c"></div>
<div class="a" style="left:851px;top:70px;width:1px;height:26px;background:#3c3c3c"></div>
<div class="a" style="left:949px;top:70px;width:1px;height:26px;background:#3c3c3c"></div>
<div class="a" style="left:802px;top:96px;width:200px;height:1px;background:#3c3c3c"></div>
<div class="t" style="left:762px;top:77px;font-size:13px;color:#f2f2f2">属性</div>
<div class="t" style="left:814px;top:77px;font-size:13px;color:#c4c4c4">页面</div>
<div class="t" style="left:865px;top:79px;font-size:13px;color:#c4c4c4">CC Libraries</div>
<div class="t" style="left:760px;top:109px">未选择对象</div>
<div class="a" style="left:750px;top:130px;width:252px;height:1px;background:#4a4a4a"></div>

<div class="t" style="left:760px;top:144px">文档</div>
<div class="fld" style="left:760px;top:164px;width:94px;height:21px"></div>
<div class="t" style="left:765px;top:170px;font-size:12.5px">A4</div>

<div class="t" style="left:767px;top:202px">宽</div>
<div class="fld" style="left:780px;top:197px;width:74px;height:21px"></div>
<div class="a" style="left:798px;top:198px;width:1px;height:19px;background:#6c6c6c"></div>
<div class="t" style="left:803px;top:203px">210 毫米</div>
<div class="t" style="left:767px;top:227px">高</div>
<div class="fld" style="left:780px;top:223px;width:74px;height:21px"></div>
<div class="a" style="left:798px;top:224px;width:1px;height:19px;background:#6c6c6c"></div>
<div class="t" style="left:803px;top:228px">297 毫米</div>

<div class="fld" style="left:905px;top:197px;width:69px;height:21px"></div>
<div class="t" style="left:910px;top:202px;font-size:12.5px">1</div>
<div class="t" style="left:899px;top:229px">对页</div>

<div class="t" style="left:760px;top:256px">边距</div>
<div class="fld" style="left:780px;top:276px;width:74px;height:21px"></div>
<div class="a" style="left:798px;top:277px;width:1px;height:19px;background:#6c6c6c"></div>
<div class="a" style="left:799px;top:277px;width:54px;height:19px;overflow:hidden"><div class="t" style="left:4px;top:5px">20 毫米</div></div>
<div class="fld" style="left:780px;top:302px;width:74px;height:21px"></div>
<div class="a" style="left:798px;top:303px;width:1px;height:19px;background:#6c6c6c"></div>
<div class="a" style="left:799px;top:303px;width:53px;height:19px;overflow:hidden"><div class="t" style="left:4px;top:5px">20.883 毫米</div></div>
<div class="fld" style="left:906px;top:276px;width:74px;height:21px"></div>
<div class="a" style="left:924px;top:277px;width:1px;height:19px;background:#6c6c6c"></div>
<div class="a" style="left:925px;top:277px;width:53px;height:19px;overflow:hidden"><div class="t" style="left:4px;top:5px">20.667 毫米</div></div>
<div class="fld" style="left:906px;top:302px;width:74px;height:21px"></div>
<div class="a" style="left:924px;top:303px;width:1px;height:19px;background:#6c6c6c"></div>
<div class="a" style="left:925px;top:303px;width:54px;height:19px;overflow:hidden"><div class="t" style="left:4px;top:5px">20 毫米</div></div>

<div class="t" style="left:760px;top:345px">方向:</div>
<div class="fld" style="left:860px;top:338px;width:120px;height:20px"></div>
<div class="t" style="left:864px;top:343px">水平</div>
<div class="btn" style="left:760px;top:368px;width:220px;height:20px;line-height:21px">调整版面</div>
<div class="a" style="left:750px;top:394px;width:252px;height:1px;background:#4a4a4a"></div>

<div class="t" style="left:760px;top:406px">页面</div>
<div class="fld" style="left:760px;top:427px;width:94px;height:21px"></div>
<div class="a" style="left:835px;top:428px;width:1px;height:19px;background:#6c6c6c"></div>
<div class="t" style="left:764px;top:432px;font-size:12.5px">1</div>
<div class="btn" style="left:760px;top:456px;width:220px;height:21px;line-height:22px">编辑</div>
<div class="a" style="left:750px;top:483px;width:252px;height:1px;background:#4a4a4a"></div>

<div class="t" style="left:760px;top:501px">标尺和网格</div>
<div class="a" style="left:750px;top:523px;width:252px;height:1px;background:#4a4a4a"></div>
<div class="t" style="left:760px;top:541px">参考线</div>
<div class="a" style="left:750px;top:563px;width:252px;height:1px;background:#4a4a4a"></div>
<div class="t" style="left:760px;top:576px">快速操作</div>
<div class="btn" style="left:760px;top:601px;width:105px;height:21px;line-height:22px">导入文件</div>
<div class="btn" style="left:875px;top:601px;width:105px;height:21px;line-height:22px">版面网格选项</div>
<svg style="left:0;top:0" width="1007" height="677">
<path d="M988.6 61.2L992.2 63.8L988.6 66.4L989.8 63.8ZM992.6 61.2L996.2 63.8L992.6 66.4L993.8 63.8Z" fill="#d0d0d0"/>
<!-- chevrons in dropdowns -->
<path d="M841 173l3.8 3.5 3.8-3.5M966 346l3.8 3.5 3.8-3.5M840 435l3.8 3.5 3.8-3.5" fill="none" stroke="#d0d0d0" stroke-width="1.1"/>
<!-- spinner arrows -->
<g fill="none" stroke="#d0d0d0" stroke-width="1.2">
<path d="M785.5 205l4-4 4 4M785.5 210.5l4 4 4-4"/>
<path d="M785.5 231l4-4 4 4M785.5 236.5l4 4 4-4"/>
<path d="M785.5 284l4-4 4 4M785.5 289.5l4 4 4-4"/>
<path d="M785.5 310l4-4 4 4M785.5 315.5l4 4 4-4"/>
<path d="M911.5 284l4-4 4 4M911.5 289.5l4 4 4-4"/>
<path d="M911.5 310l4-4 4 4M911.5 315.5l4 4 4-4"/>
</g>
<!-- doc intent icons -->
<rect x="881" y="164" width="22" height="22" rx="3" fill="#333"/>
<rect x="931" y="164" width="22" height="22" rx="3" fill="#333"/>
<path d="M884 167h14v14h-3.5v2.5l-10.5-1.5z" fill="#c8c8c8"/>
<path d="M896.5 168.5v11" stroke="#333" stroke-width="1"/>
<path d="M887 179l2.5-9h1l2.5 9M888 176h4" fill="none" stroke="#333" stroke-width="1"/>
<path d="M910.5 167.5h12v13.5h-3v2l-9-1.5z" fill="none" stroke="#c8c8c8" stroke-width="1"/>
<path d="M912.5 168.5v12.5" stroke="#c8c8c8" stroke-width="1"/>
<path d="M917 170v11M914.5 174l2.5-1.5 2.5 1.5M914.5 177l2.5-1.5 2.5 1.5" fill="none" stroke="#c8c8c8" stroke-width="1"/>
<rect x="935.5" y="167.5" width="13" height="15" fill="none" stroke="#c8c8c8" stroke-width="1"/>
<circle cx="942" cy="171.5" r="2" fill="#c8c8c8"/>
<path d="M938 182v-6a2 2 0 0 1 2-2h4a2 2 0 0 1 2 2v6z" fill="#c8c8c8"/>
<rect x="960.5" y="167.5" width="12" height="15" fill="none" stroke="#c8c8c8" stroke-width="1"/>
<circle cx="964" cy="175" r="1.8" fill="#c8c8c8"/>
<path d="M972 169v12h-4a2 2 0 0 1-2-2v-8a2 2 0 0 1 2-2z" fill="#c8c8c8"/>
<!-- page count icon -->
<path d="M883 207h7v8h-7zM887 202h3v5h-3zM883 205.5l3.2-3.5v3.5zM893 207h7v8h-7zM893 202h3v5h-3zM900 205.5l-3.2-3.5v3.5z" fill="#c8c8c8"/>
<path d="M891.5 199v19" stroke="#c8c8c8" stroke-width="1"/>
<!-- checkbox -->
<rect x="881" y="228" width="12" height="12" rx="2" fill="#c4c4c4"/>
<path d="M883.5 234l2.5 2.5 4.5-5" fill="none" stroke="#444" stroke-width="1.4"/>
<!-- margin icons -->
<path d="M761 278h16v4h-16z" fill="#c8c8c8"/>
<rect x="761.5" y="285.5" width="15" height="8" fill="none" stroke="#c8c8c8" stroke-width="1"/>
<rect x="761.5" y="304.5" width="15" height="8" fill="none" stroke="#c8c8c8" stroke-width="1"/>
<path d="M761 315.5h16v4h-16z" fill="#c8c8c8"/>
<rect x="887.5" y="280.5" width="10" height="12" fill="none" stroke="#c8c8c8" stroke-width="1"/>
<path d="M899 280h3v13h-3z" fill="#c8c8c8"/>
<path d="M902.5 278v16" stroke="#c8c8c8"/>
<path d="M887 305h3v13h-3z" fill="#c8c8c8"/>
<path d="M890.5 303.5v16" stroke="#c8c8c8"/>
<rect x="892.5" y="305.5" width="10" height="12" fill="none" stroke="#c8c8c8" stroke-width="1"/>
<!-- link icon -->
<rect x="867.2" y="291.8" width="5.8" height="12.6" rx="2.9" fill="none" stroke="#c4c4c4" stroke-width="1.5"/>
<path d="M863.5 292l12.5 12.5" stroke="#535353" stroke-width="3"/>
<path d="M863.8 292.3l12 12" stroke="#c4c4c4" stroke-width="1.5"/>
<!-- pages new/trash -->
<path d="M936 434h7v10h-6.5v-3.5h-3.5v-3.5z" fill="#c8c8c8"/>
<path d="M933.5 440.5h3v3z" fill="#c8c8c8"/>
<g fill="none" stroke="#7c7c7c" stroke-width="1">
<path d="M960.5 435.5h11M963.5 435.5v-2h5v2M961.5 436.5l1 8.5h7l1-8.5M964.5 438v5.5M967.5 438v5.5"/>
</g>
<!-- ruler & grid icons -->
<rect x="881" y="494" width="22" height="22" rx="3" fill="#333"/>
<rect x="957" y="494" width="22" height="22" rx="3" fill="#333"/>
<path d="M884 497h16v4h-12v12h-4z" fill="#c8c8c8"/>
<path d="M890 498h1v2h-1zM893 498h1v2h-1zM896 498h1v2h-1zM898 498h1v2h-1zM885 503h2v1h-2zM885 506h2v1h-2zM885 509h2v1h-2zM885 511h2v1h-2z" fill="#222"/>
<rect x="909.5" y="497.5" width="15" height="15" fill="none" stroke="#c8c8c8" stroke-width="1"/>
<path d="M909 500.5h16M909 503.5h16M909 506.5h16M909 509.5h16M912.5 500v10M921.5 500v10" stroke="#c8c8c8" stroke-width="1"/>
<rect x="934.5" y="497.5" width="15" height="15" fill="none" stroke="#c8c8c8" stroke-width="1"/>
<path d="M934 502.5h16M934 507.5h16M939.5 498v14M944.5 498v14" stroke="#c8c8c8" stroke-width="1"/>
<path d="M960 497h4v16h-4zM966 497h4v16h-4zM972 497h4v16h-4z" fill="#c8c8c8"/>
<path d="M961 498h2v2h-2zM961 501h2v2h-2zM961 504h2v2h-2zM961 507h2v2h-2zM961 510h2v2h-2zM967 498h2v2h-2zM967 501h2v2h-2zM967 504h2v2h-2zM967 507h2v2h-2zM967 510h2v2h-2zM973 498h2v2h-2zM973 501h2v2h-2zM973 504h2v2h-2zM973 507h2v2h-2zM973 510h2v2h-2z" fill="#222"/>
<!-- guides icons -->
<rect x="881" y="534" width="22" height="22" rx="3" fill="#333"/>
<rect x="919" y="534" width="22" height="22" rx="3" fill="#333"/>
<rect x="957" y="534" width="22" height="22" rx="3" fill="#333"/>
<path d="M887.5 537v16M890.5 537v16M884 542.5h16M884 549.5h16" stroke="#c8c8c8" stroke-width="1"/>
<path d="M925.5 537v16M928.5 537v16M922 542.5h16M922 549.5h8" stroke="#c8c8c8" stroke-width="1"/>
<path d="M932 548h7v6h-7z" fill="#c8c8c8"/>
<path d="M937.3 548v-2.3a2.2 2.2 0 0 0-4.4 0" fill="none" stroke="#c8c8c8" stroke-width="1.2"/>
<path d="M963.5 537v16M960 542.5h16" stroke="#c8c8c8" stroke-width="1"/>
<path d="M968 539.5l-3.5 3 3.5 3" fill="none" stroke="#c8c8c8" stroke-width="1"/>
<path d="M974 545l-4.5 4.5h3l-2.5 4.5 5.5-5.5h-3l2.5-3.5z" fill="#c8c8c8"/>
</svg>

<svg style="left:0;top:0" width="1007" height="677">
<defs>
<linearGradient id="gr1" x1="0" x2="1" y1="0" y2="0"><stop offset="0" stop-color="#b8b8b8"/><stop offset="1" stop-color="#555"/></linearGradient>
<linearGradient id="gr2" x1="0" x2="0" y1="0" y2="1"><stop offset="0" stop-color="#5a5a5a"/><stop offset="1" stop-color="#c0c0c0"/></linearGradient>
</defs>
<!-- header >> -->
<path d="M9.6 61.2L13.2 63.8L9.6 66.4L10.8 63.8ZM13.6 61.2L17.2 63.8L13.6 66.4L14.8 63.8Z" fill="#d0d0d0"/>
<!-- gripper -->
<path d="M14.5 73v4M16.5 73v4M18.5 73v4M20.5 73v4M22.5 73v4M24.5 73v4M26.5 73v4M28.5 73v4M30.5 73v4M32.5 73v4" stroke="#3a3a3a" stroke-width="1"/>
<!-- selected bg -->
<rect x="10" y="85" width="28" height="22" rx="3" fill="#333"/>
<!-- 1 selection -->
<path d="M19.7 88.7L30.3 99.3H25.2L19.7 104.3Z" fill="none" stroke="#c8c8c8" stroke-width="1.4" stroke-linejoin="miter"/>
<!-- 2 direct selection -->
<path d="M19 112L31 124H25L19 129.5Z" fill="#c8c8c8"/>
<!-- 3 page tool -->
<path d="M18.5 136.5H25L29.5 141V143M18.5 136.5V150.5H26" fill="none" stroke="#c8c8c8" stroke-width="1.2"/>
<path d="M25 136.5V141H29.5" fill="none" stroke="#c8c8c8" stroke-width="1"/>
<path d="M26.5 142L33.5 148L26.5 152.5Z" fill="#c8c8c8"/>
<!-- 4 gap tool -->
<path d="M15 161h2v14h-2zM31 161h2v14h-2z" fill="#c8c8c8"/>
<path d="M18 168l4-3.5v7zM30 168l-4-3.5v7z" fill="#c8c8c8"/>
<path d="M21 167.5h6v1.2h-6z" fill="#c8c8c8"/>
<!-- 5 content collector -->
<path d="M19.5 185L24 189.5" stroke="#c8c8c8" stroke-width="1.6"/>
<path d="M25 186V190.5H20.5Z" fill="#c8c8c8"/>
<path d="M17 190h2v8h10v-8h2v10h-14z" fill="#c8c8c8"/>
<path d="M20 193h2v2h-2zM23 193h2v2h-2zM26 193h2v2h-2zM20 196h2v2h-2zM23 196h2v2h-2zM26 196h2v2h-2z" fill="#c8c8c8"/>
<path d="M37 199v3h-3z" fill="#c8c8c8"/>
<!-- separators -->
<path d="M7 204.5h34M7 400.5h34M7 499.5h34M7 598.5h34" stroke="#474747"/>
<!-- 6 type T -->
<path d="M17 212h14v4h-1.3v-2.3h-4.9v10.8h2v1.5h-6.6v-1.5h2v-10.8h-4.9v2.3h-1.3z" fill="#c8c8c8"/>
<path d="M37 226v3h-3z" fill="#c8c8c8"/>
<!-- 7 line -->
<path d="M16.8 249.5L31 235.5" stroke="#c8c8c8" stroke-width="1.5"/>
<!-- 8 pen -->
<g transform="translate(24,267) rotate(45)">
<rect x="-3.5" y="-11" width="7" height="4.2" rx="0.8" fill="#c8c8c8"/>
<path d="M-4.6 -6H4.6V-1.5C4.6 3 2 7 0 11C-2 7 -4.6 3 -4.6 -1.5Z" fill="#c8c8c8"/>
<path d="M0 0V10" stroke="#535353" stroke-width="1.2"/>
</g>
<path d="M37 274v3h-3z" fill="#c8c8c8"/>
<!-- 9 pencil -->
<g transform="translate(24,291) rotate(45)">
<rect x="-3.5" y="-11" width="7" height="4.2" rx="0.8" fill="#c8c8c8"/>
<path d="M-3.5 -6H3.5V4L0 11L-3.5 4Z" fill="#c8c8c8"/>
<path d="M-1.2 6.5H1.2L0 9.5Z" fill="#535353"/>
</g>
<path d="M37 298v3h-3z" fill="#c8c8c8"/>
<!-- 10 frame X -->
<path d="M16.7 308.7h14.6v12.6h-14.6zM16.7 308.7l14.6 12.6M31.3 308.7l-14.6 12.6" fill="none" stroke="#c8c8c8" stroke-width="1.3"/>
<path d="M37 322v3h-3z" fill="#c8c8c8"/>
<!-- 11 rect -->
<rect x="16.7" y="332.7" width="14.6" height="12.6" fill="#6b6b6b" stroke="#c8c8c8" stroke-width="1.3"/>
<path d="M37 346v3h-3z" fill="#c8c8c8"/>
<!-- 12 table rows -->
<path d="M16 356h16v2h-14v3h14v1h-14v2h14v2h-14v2.5h14v2h-16z" fill="#c8c8c8"/>
<path d="M21 358h1v3h-1zM25 358h1v3h-1zM29 358h1v3h-1zM21 366h1v3h-1zM25 366h1v3h-1zM29 366h1v3h-1z" fill="#c8c8c8"/>
<!-- 13 table cols -->
<path d="M16 379h16v2h-16z" fill="#c8c8c8"/>
<path d="M18 381h1.3v14h-1.3zM22.5 381h1.3v14h-1.3zM26 381h1.3v14h-1.3zM30.5 381h1.5v14h-1.5z" fill="#c8c8c8"/>
<path d="M19 384.5h4v1h-4zM19 388h4v1h-4zM19 391.5h4v1h-4zM27 384.5h4v1h-4zM27 388h4v1h-4zM27 391.5h4v1h-4z" fill="#c8c8c8"/>
<!-- 14 scissors -->
<path d="M16 408.8L28 416.5M16 419.8L28 412" stroke="#c8c8c8" stroke-width="1.8" stroke-linecap="round"/>
<circle cx="30.3" cy="409.3" r="2.4" fill="#535353" stroke="#c8c8c8" stroke-width="1.2"/>
<circle cx="30.3" cy="419.2" r="2.4" fill="#535353" stroke="#c8c8c8" stroke-width="1.2"/>
<!-- 15 free transform -->
<path d="M15 430L25 440H19.5L15 444.5Z" fill="#c8c8c8"/>
<path d="M21.5 433.5h12v10.5h-12v-3" fill="none" stroke="#c8c8c8" stroke-width="1" stroke-dasharray="1.2 1"/>
<path d="M20.5 432.5h2v2h-2zM26.5 432.5h2v2h-2zM32.5 432.5h2v2h-2zM32.5 438h2v2h-2zM20.5 443h2v2h-2zM26.5 443h2v2h-2zM32.5 443h2v2h-2z" fill="#c8c8c8"/>
<path d="M37 445v3h-3z" fill="#c8c8c8"/>
<!-- 16 gradient -->
<rect x="16.5" y="455.5" width="15" height="13" fill="url(#gr1)" stroke="#c8c8c8" stroke-width="1.2"/>
<!-- 17 gradient feather -->
<rect x="16.5" y="479.5" width="15" height="13" fill="url(#gr2)" stroke="#c8c8c8" stroke-width="1.2"/>
<path d="M18 481h3v2.5h-3zM24 481h3v2.5h-3zM21 483.5h3v2.5h-3zM27 483.5h3v2.5h-3z" fill="#4a4a4a" opacity="0.5"/>
<!-- 18 note -->
<path d="M17 506h14v9.5l-4.5 4.5h-9.5z" fill="#c8c8c8"/>
<path d="M20 509.5h8M20 512.5h8M20 515.5h4" stroke="#535353" stroke-width="1"/>
<path d="M27.5 520L31 516.5V520Z" fill="#c8c8c8"/>
<!-- 19 eyedropper -->
<g transform="translate(23.5,536.5) rotate(45)">
<rect x="-2.7" y="-12" width="5.4" height="6.5" rx="2.7" fill="#c8c8c8"/>
<rect x="-4.2" y="-6.5" width="8.4" height="2.8" rx="1" fill="#c8c8c8"/>
<path d="M-2 -3.5H2V8.5A2 2 0 0 1 -2 8.5Z" fill="none" stroke="#c8c8c8" stroke-width="1.3"/>
</g>
<rect x="24" y="541" width="10" height="4.5" fill="#c8c8c8"/>
<path d="M25 542h2.4v2.5h-2.4z" fill="#333"/><path d="M28.2 542h2.4v2.5h-2.4z" fill="#777"/><path d="M31.4 542h1.8v2.5h-1.8z" fill="#aaa"/>
<path d="M37 545v3h-3z" fill="#c8c8c8"/>
<!-- 20 hand -->
<g stroke="#c8c8c8" stroke-width="2.1" stroke-linecap="round" fill="none">
<path d="M20.6 554.6L21.3 561M24 553.8V561M27.4 554.6L26.9 561M30.6 557.6L28.9 562.5M16.4 560.8L20.5 564.5"/>
</g>
<path d="M19.8 559.5H28.8L29.8 562C29.2 566 27.5 569 24.8 569C22.5 569 20.8 567.5 19 564.5Z" fill="#c8c8c8"/>
<!-- 21 zoom -->
<circle cx="22" cy="583" r="5.3" fill="none" stroke="#c8c8c8" stroke-width="1.3"/>
<path d="M25.8 587L31 592" stroke="#c8c8c8" stroke-width="2.4" stroke-linecap="round"/>
<!-- 22 small fill/stroke -->
<rect x="12.5" y="605.5" width="8" height="8" fill="#222" stroke="#c8c8c8" stroke-width="1"/>
<rect x="14.5" y="607.5" width="4" height="4" fill="#535353"/>
<rect x="9.5" y="602.5" width="7" height="7" fill="#fff" stroke="#333" stroke-width="1"/>
<path d="M10 609L16 603" stroke="#e00" stroke-width="1.2"/>
<rect x="9" y="602" width="8" height="8" fill="none" stroke="#c8c8c8" stroke-width="0.6" opacity="0.6"/>
<!-- swap arrow -->
<path d="M31 608h3a2 2 0 0 1 2 2v3.5" fill="none" stroke="#c8c8c8" stroke-width="1.5"/>
<path d="M28.3 608l3.4-3v6zM36 617l-3-3.5h6z" fill="#c8c8c8"/>
<!-- stroke big -->
<path d="M19 629h19v19h-19zM24 634v9h9v-9z" fill="#000" fill-rule="evenodd"/>
<!-- fill big -->
<rect x="10" y="620" width="19.5" height="19.5" fill="#fff"/>
<path d="M10 639.5L29.5 620" stroke="#f00" stroke-width="1.6"/>
<!-- modes -->
<rect x="10" y="656" width="14" height="12" rx="2" fill="#333"/>
<rect x="13.5" y="658.5" width="7" height="7" fill="#555" stroke="#c8c8c8" stroke-width="1.1"/>
<path d="M28.5 658h8.5v2.5h-1v-1.2h-2.4v5.7h1.2v1h-4v-1h1.2v-5.7h-2.4v1.2h-1.1z" fill="#c8c8c8"/>
</svg>

</body></html>
